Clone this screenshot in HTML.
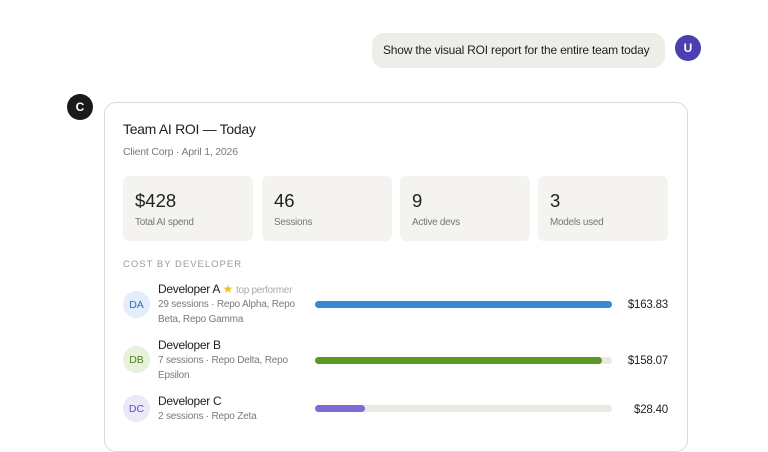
<!DOCTYPE html>
<html><head><meta charset="utf-8"><style>
*{margin:0;padding:0;box-sizing:border-box}
body{width:768px;height:432px;overflow:hidden;background:#fff;font-family:"Liberation Sans",sans-serif;position:relative;color:#1f1f1f}
.a{position:absolute}
.av{position:absolute;border-radius:50%;display:flex;align-items:center;justify-content:center;font-weight:bold;font-size:12px;color:#fff}
.stat{position:absolute;top:176px;width:130px;height:65px;background:#f4f3ef;border-radius:6px}
.stat .v{position:absolute;left:12px;top:14px;font-size:18.5px;color:#1f1f1f}
.stat .l{position:absolute;left:12px;top:41px;font-size:10px;letter-spacing:-0.3px;color:#777}
.dav{position:absolute;left:123px;width:27px;height:27px;border-radius:50%;font-size:10.5px;display:flex;align-items:center;justify-content:center}
.nm{position:absolute;left:158px;font-size:12px;letter-spacing:-0.3px;color:#1f1f1f}
.mt{position:absolute;left:158px;font-size:10px;letter-spacing:-0.2px;color:#7a7a7a;line-height:15px;width:146px}
.bar{position:absolute;left:315px;width:297px;height:7px;border-radius:4px;background:#ebe9e4}
.bar i{display:block;height:7px;border-radius:4px}
.amt{position:absolute;right:100px;font-size:11.5px;letter-spacing:-0.2px;color:#1f1f1f}
</style></head><body>
<div class="a" style="left:372px;top:33px;width:293px;height:35px;background:#efede7;border-radius:12px;font-size:12px;letter-spacing:-0.2px;line-height:35px;padding-left:11px;white-space:nowrap">Show the visual ROI report for the entire team today</div>
<div class="av" style="left:675px;top:35px;width:26px;height:26px;background:#4c3fb1">U</div>
<div class="av" style="left:67px;top:94px;width:26px;height:26px;background:#1a1a1a">C</div>
<div class="a" style="left:104px;top:102px;width:584px;height:350px;border:1px solid #dcdad5;border-radius:12px"></div>
<div class="a" style="left:123px;top:121px;font-size:14px;letter-spacing:-0.3px">Team AI ROI — Today</div>
<div class="a" style="left:123px;top:146px;font-size:10.5px;letter-spacing:-0.2px;color:#7a7a7a">Client Corp · April 1, 2026</div>
<div class="stat" style="left:123px"><div class="v">$428</div><div class="l">Total AI spend</div></div>
<div class="stat" style="left:262px"><div class="v">46</div><div class="l">Sessions</div></div>
<div class="stat" style="left:400px"><div class="v">9</div><div class="l">Active devs</div></div>
<div class="stat" style="left:538px"><div class="v">3</div><div class="l">Models used</div></div>
<div class="a" style="left:123px;top:259px;font-size:9.5px;letter-spacing:1px;color:#999">COST BY DEVELOPER</div>

<div class="dav" style="top:291px;background:#e3eefa;color:#2d6db5">DA</div>
<div class="nm" style="top:282px">Developer A <span style="color:#f0c020">★</span> <span style="font-size:10px;color:#aaa">top performer</span></div>
<div class="mt" style="top:297px">29 sessions · Repo Alpha, Repo Beta, Repo Gamma</div>
<div class="bar" style="top:301px"><i style="width:100%;background:#3a86d4"></i></div>
<div class="amt" style="top:299px">$163.83</div>

<div class="dav" style="top:346px;background:#e8f1dc;color:#4d7d1f">DB</div>
<div class="nm" style="top:338px">Developer B</div>
<div class="mt" style="top:353px">7 sessions · Repo Delta, Repo Epsilon</div>
<div class="bar" style="top:357px"><i style="width:96.5%;background:#5c9826"></i></div>
<div class="amt" style="top:355px">$158.07</div>

<div class="dav" style="top:395px;background:#ebe8f8;color:#5a4fbf">DC</div>
<div class="nm" style="top:394px">Developer C</div>
<div class="mt" style="top:409px">2 sessions · Repo Zeta</div>
<div class="bar" style="top:405px"><i style="width:17%;background:#7a6ed6"></i></div>
<div class="amt" style="top:404px">$28.40</div>
</body></html>
